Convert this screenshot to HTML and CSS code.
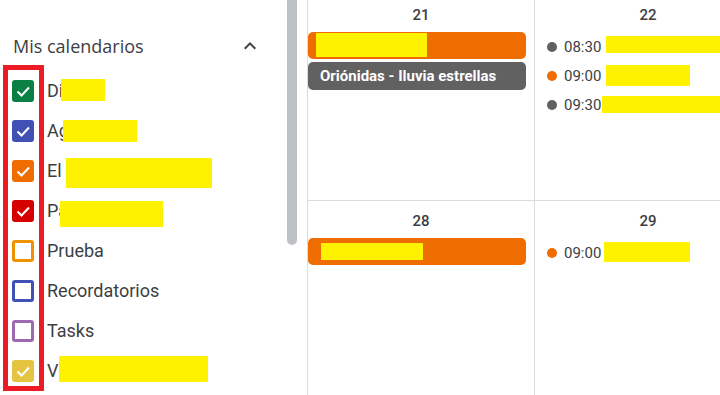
FILE: index.html
```html
<!DOCTYPE html>
<html lang="es">
<head>
<meta charset="utf-8">
<title>Calendario</title>
<link rel="stylesheet" href="styles.css">
</head>
<body>
<div class="app">
  <aside class="sidebar">
    <div class="side-content">
      <div class="section-head">
        <span class="section-title">Mis calendarios</span>
        <svg class="chev" viewBox="0 0 24 24" width="24" height="24"><path d="M7.41 15.41 12 10.83l4.59 4.58L18 14l-6-6-6 6z"/></svg>
      </div>
      <ul class="cal-list">
        <li class="cal-item">
          <span class="cb cb-on c-green"><svg viewBox="0 0 22 22"><polyline points="5.5,11.5 9.5,15.5 17,7.5"/></svg></span>
          <span class="cal-label">Di<span class="redact rd-di"></span></span>
        </li>
        <li class="cal-item">
          <span class="cb cb-on c-blue"><svg viewBox="0 0 22 22"><polyline points="5.5,11.5 9.5,15.5 17,7.5"/></svg></span>
          <span class="cal-label">Ag<span class="redact rd-ag"></span></span>
        </li>
        <li class="cal-item">
          <span class="cb cb-on c-orange"><svg viewBox="0 0 22 22"><polyline points="5.5,11.5 9.5,15.5 17,7.5"/></svg></span>
          <span class="cal-label">El<span class="redact rd-el"></span></span>
        </li>
        <li class="cal-item">
          <span class="cb cb-on c-red"><svg viewBox="0 0 22 22"><polyline points="5.5,11.5 9.5,15.5 17,7.5"/></svg></span>
          <span class="cal-label">Pa<span class="redact rd-pa"></span></span>
        </li>
        <li class="cal-item">
          <span class="cb cb-off o-orange"></span>
          <span class="cal-label">Prueba</span>
        </li>
        <li class="cal-item">
          <span class="cb cb-off o-blue"></span>
          <span class="cal-label">Recordatorios</span>
        </li>
        <li class="cal-item">
          <span class="cb cb-off o-purple"></span>
          <span class="cal-label">Tasks</span>
        </li>
        <li class="cal-item">
          <span class="cb cb-on c-yellow"><svg viewBox="0 0 22 22"><polyline points="5.5,11.5 9.5,15.5 17,7.5"/></svg></span>
          <span class="cal-label">V<span class="redact rd-v"></span></span>
        </li>
      </ul>
      <div class="annot"></div>
    </div>
    <div class="scroll-track"><div class="scroll-thumb"></div></div>
  </aside>
  <main class="month">
    <div class="week">
      <div class="day">
        <div class="day-num">21</div>
        <div class="chip chip-orange"><span class="redact rd-c1"></span></div>
        <div class="chip chip-grey">Oriónidas - Iluvia estrellas</div>
      </div>
      <div class="day">
        <div class="day-num">22</div>
        <div class="ev"><span class="dot dot-grey"></span><span class="ev-time">08:30</span><span class="redact rd-t1"></span></div>
        <div class="ev"><span class="dot dot-orange"></span><span class="ev-time">09:00</span><span class="redact rd-t2"></span></div>
        <div class="ev"><span class="dot dot-grey"></span><span class="ev-time">09:30</span><span class="redact rd-t3"></span></div>
      </div>
    </div>
    <div class="week">
      <div class="day">
        <div class="day-num">28</div>
        <div class="chip chip-orange"><span class="redact rd-c2"></span></div>
      </div>
      <div class="day">
        <div class="day-num">29</div>
        <div class="ev"><span class="dot dot-orange"></span><span class="ev-time">09:00</span><span class="redact rd-t4"></span></div>
      </div>
    </div>
  </main>
</div>
</body>
</html>
```
FILE: styles.css
```css
* { box-sizing: border-box; }
html, body { margin: 0; padding: 0; background: #fff; }
body { font-family: Roboto, "Liberation Sans", sans-serif; color: #3c4043; }

.app { display: flex; width: 720px; height: 395px; overflow: hidden; }

.sidebar { flex: none; width: 307px; display: flex; }
.side-content { position: relative; flex: 1; }
.scroll-track { flex: none; width: 10px; margin-right: 10px; }
.scroll-thumb { width: 10px; height: 250px; margin-top: -5px; border-radius: 5px; background: #bdc1c6; }

.section-head { display: flex; align-items: center; justify-content: space-between; height: 24px; margin-top: 34px; padding-left: 13px; padding-right: 25px; }
.section-title { font-family: "Open Sans", sans-serif; font-size: 18px; line-height: 24px; color: #3c4043; }
.chev { fill: #3c4043; }

.cal-list { list-style: none; margin: 13px 0 0; padding: 0; }
.cal-item { display: flex; align-items: center; height: 40px; padding-left: 12px; }
.cb { flex: none; width: 22px; height: 22px; border-radius: 3px; display: flex; }
.cb svg { width: 22px; height: 22px; fill: none; stroke: #fff; stroke-width: 2; }
.cb-off { border: 3px solid; background: #fff; }
.c-green { background: #0b8043; }
.c-blue { background: #3f51b5; }
.c-orange { background: #ef6c00; }
.c-red { background: #d50000; }
.c-yellow { background: #e4c441; }
.o-orange { border-color: #f09300; }
.o-blue { border-color: #3f51b5; }
.o-purple { border-color: #9e69af; }

.cal-label { display: flex; align-items: center; margin-left: 13px; font-size: 18px; line-height: 24px; color: #3c4043; }

.redact { display: inline-block; flex: none; background: #fff200; }
.rd-di { width: 44px; height: 22px; margin-left: -2px; margin-bottom: 3px; }
.rd-ag { width: 74px; height: 22px; margin-left: -6px; }
.rd-el { width: 146px; height: 30px; margin-left: 4px; margin-top: 4px; }
.rd-pa { width: 103px; height: 26px; margin-left: -8px; margin-top: 6px; }
.rd-v { width: 149px; height: 26px; margin-left: 1px; margin-bottom: 4px; }

.annot { position: absolute; left: 3px; top: 65px; width: 41px; height: 326px; border: 5px solid #ed1c24; }

.month { flex: 1; margin-top: -6px; overflow: hidden; }
.week { display: grid; grid-template-columns: 227px 227px; height: 206px; border-top: 1px solid #dadce0; }
.day { border-left: 1px solid #dadce0; padding-top: 10px; }
.day-num { text-align: center; font-size: 15px; font-weight: 500; line-height: 21px; color: #3c4043; margin-bottom: 6px; }

.chip { height: 27px; margin-right: 8px; margin-bottom: 3px; border-radius: 5px; display: flex; align-items: center; }
.chip-orange { background: #ef6c00; padding-left: 8px; }
.chip-grey { background: #616161; color: #fff; font-weight: 700; font-size: 15px; padding-left: 12px; height: 28px; }
.rd-c1 { width: 111px; height: 24px; margin-bottom: 1px; }
.rd-c2 { width: 102px; height: 17px; margin-left: 5px; }

.ev { display: flex; align-items: center; height: 29px; padding-left: 12px; font-size: 15px; white-space: nowrap; }
.dot { flex: none; width: 10px; height: 10px; border-radius: 50%; margin-right: 7px; }
.dot-grey { background: #616161; }
.dot-orange { background: #ef6c00; }
.ev-time { color: #3c4043; }
.rd-t1 { width: 160px; height: 17px; margin-left: 5px; margin-bottom: 4px; }
.rd-t2 { width: 84px; height: 21px; margin-left: 5px; }
.rd-t3 { width: 160px; height: 17px; margin-left: 1px; }
.rd-t4 { width: 86px; height: 20px; margin-left: 3px; margin-bottom: 1px; }
```
